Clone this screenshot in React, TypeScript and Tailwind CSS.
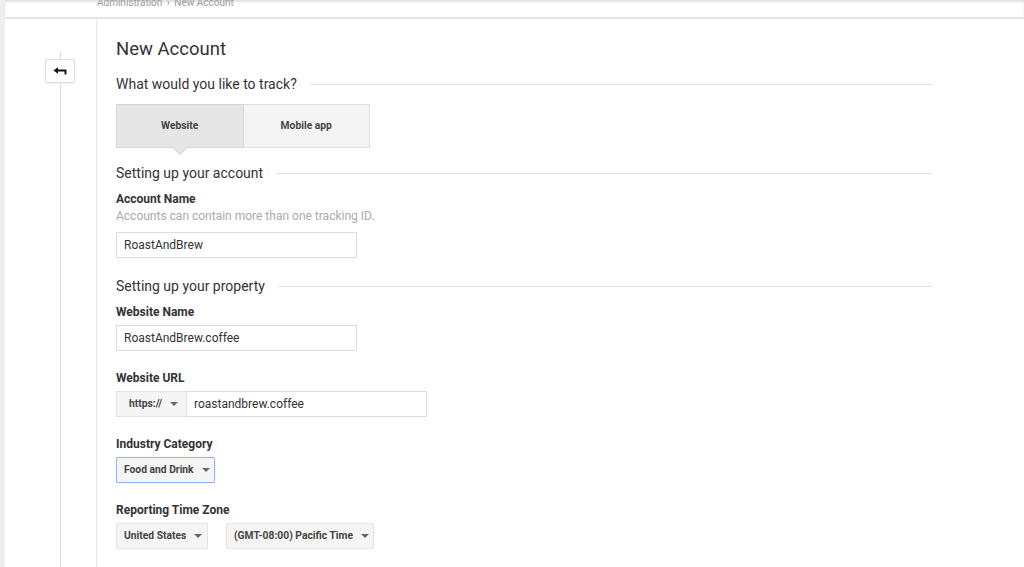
import React from "react";

const font = { fontFamily: 'Roboto, "Liberation Sans", Arial, sans-serif' };

function Caret() {
  return (
    <svg width="8" height="4" viewBox="0 0 8 4" className="shrink-0">
      <path d="M0 0 L8 0 L4 4 Z" fill="#666" />
    </svg>
  );
}

function SectionHeading({ children, className }: { children: React.ReactNode; className?: string }) {
  return (
    <div className={`flex items-center gap-[13px] ${className ?? ""}`}>
      <span className="text-[14px] leading-[20px] text-[#333] whitespace-nowrap">{children}</span>
      <div className="h-px flex-1 bg-[#e3e3e3]" />
    </div>
  );
}

function Label({ children, className }: { children: React.ReactNode; className?: string }) {
  return (
    <div className={`text-[12px] font-bold leading-[16px] text-[#333] ${className ?? ""}`}>
      {children}
    </div>
  );
}

function TextInput({ value, className }: { value: string; className?: string }) {
  return (
    <div
      className={`flex h-[26px] items-center whitespace-nowrap border border-[#dcdcdc] bg-white px-[7px] text-[12px] text-[#333] ${className ?? ""}`}
    >
      {value}
    </div>
  );
}

function Dropdown({ label, className }: { label: string; className?: string }) {
  return (
    <div
      className={`flex h-[26px] items-center justify-between gap-[8px] whitespace-nowrap rounded-[2px] border bg-[#f5f5f5] pl-[7px] pr-[9px] text-[10.3px] font-bold text-[#444] ${className ?? ""}`}
    >
      <span>{label}</span>
      <Caret />
    </div>
  );
}

export default function App() {
  return (
    <div className="flex h-[567px] w-full overflow-hidden bg-[#eeeeee]" style={font}>
      <div className="ml-[5px] flex flex-1 flex-col bg-white">
        {/* breadcrumb bar */}
        <div className="h-[19px] shrink-0 overflow-hidden border-b-[2px] border-[#e4e4e4] pl-[92px] shadow-[inset_0_2px_2px_rgba(0,0,0,0.12)]">
          <div className="-mt-[5px] whitespace-nowrap text-[10px] leading-[16px] text-[#9a9a9a]">
            Administration <span className="mx-[2px]">›</span> New Account
          </div>
        </div>

        <div className="flex flex-1">
          {/* left rail */}
          <div className="flex w-[92px] shrink-0 flex-col border-r border-[#e6e6e6] pl-[40px] pt-[33px]">
            <div className="flex w-[30px] flex-1 flex-col items-center">
              <div className="h-[7px] w-px bg-[#dadada]" />
              <div className="flex h-[24px] w-[30px] items-center justify-center rounded-[2px] border border-[#dcdcdc] bg-white shadow-[0_1px_1px_rgba(0,0,0,0.04)]">
                <svg width="15" height="8" viewBox="0 0 15 8">
                  <path d="M0.5 3.5 L5 0.3 L5 6.7 Z" fill="#111" />
                  <path d="M4 3.5 H12.5 V7.5" stroke="#111" strokeWidth="1.9" fill="none" />
                </svg>
              </div>
              <div className="w-px flex-1 bg-[#dadada]" />
            </div>
          </div>

          {/* main content */}
          <div className="pl-[19px] pt-[18px]">
            <div className="w-[816px]">
              <div className="text-[18.5px] leading-[24px] text-[#333]">New Account</div>

              <SectionHeading className="mt-[13px]">What would you like to track?</SectionHeading>

              <div className="relative mt-[10px] flex h-[44px] w-[254px]">
                <div className="flex flex-1 items-center justify-center border border-[#d6d6d6] bg-[#e6e6e6] text-[10.3px] font-bold text-[#444]">
                  Website
                </div>
                <div className="flex flex-1 items-center justify-center border border-l-0 border-[#e0e0e0] bg-[#f4f4f4] text-[10.3px] font-bold text-[#444]">
                  Mobile app
                </div>
                <svg
                  width="16"
                  height="8"
                  viewBox="0 0 16 8"
                  className="absolute left-[56px] top-[43px]"
                >
                  <path d="M0 0 L8 7.5 L16 0 Z" fill="#e6e6e6" />
                  <path d="M0 0 L8 7.5 L16 0" stroke="#d6d6d6" strokeWidth="1" fill="none" />
                </svg>
              </div>

              <SectionHeading className="mt-[15px]">Setting up your account</SectionHeading>
              <Label className="mt-[8px]">Account Name</Label>
              <div className="mt-[1px] text-[12px] leading-[16px] text-[#aaaaaa]">
                Accounts can contain more than one tracking ID.
              </div>
              <TextInput value="RoastAndBrew" className="mt-[8px] w-[241px]" />

              <SectionHeading className="mt-[18px]">Setting up your property</SectionHeading>
              <Label className="mt-[8px]">Website Name</Label>
              <TextInput value="RoastAndBrew.coffee" className="mt-[5px] w-[241px]" />

              <Label className="mt-[19px]">Website URL</Label>
              <div className="mt-[5px] flex">
                <div className="flex h-[26px] w-[71px] items-center gap-[8px] whitespace-nowrap border border-[#e3e3e3] bg-[#f5f5f5] pl-[12px] text-[10.3px] font-bold text-[#444]">
                  <span>https://</span>
                  <Caret />
                </div>
                <TextInput value="roastandbrew.coffee" className="w-[240px] border-l-0" />
              </div>

              <Label className="mt-[19px]">Industry Category</Label>
              <div className="mt-[5px] flex">
                <Dropdown
                  label="Food and Drink"
                  className="w-[99px] border-[#8fb3ee] shadow-[0_0_1px_rgba(77,144,254,0.4)]"
                />
              </div>

              <Label className="mt-[19px]">Reporting Time Zone</Label>
              <div className="mt-[5px] flex gap-[18px]">
                <Dropdown label="United States" className="w-[92px] border-[#e3e3e3]" />
                <Dropdown label="(GMT-08:00) Pacific Time" className="w-[148px] border-[#e3e3e3]" />
              </div>
            </div>
          </div>
        </div>
      </div>
    </div>
  );
}
